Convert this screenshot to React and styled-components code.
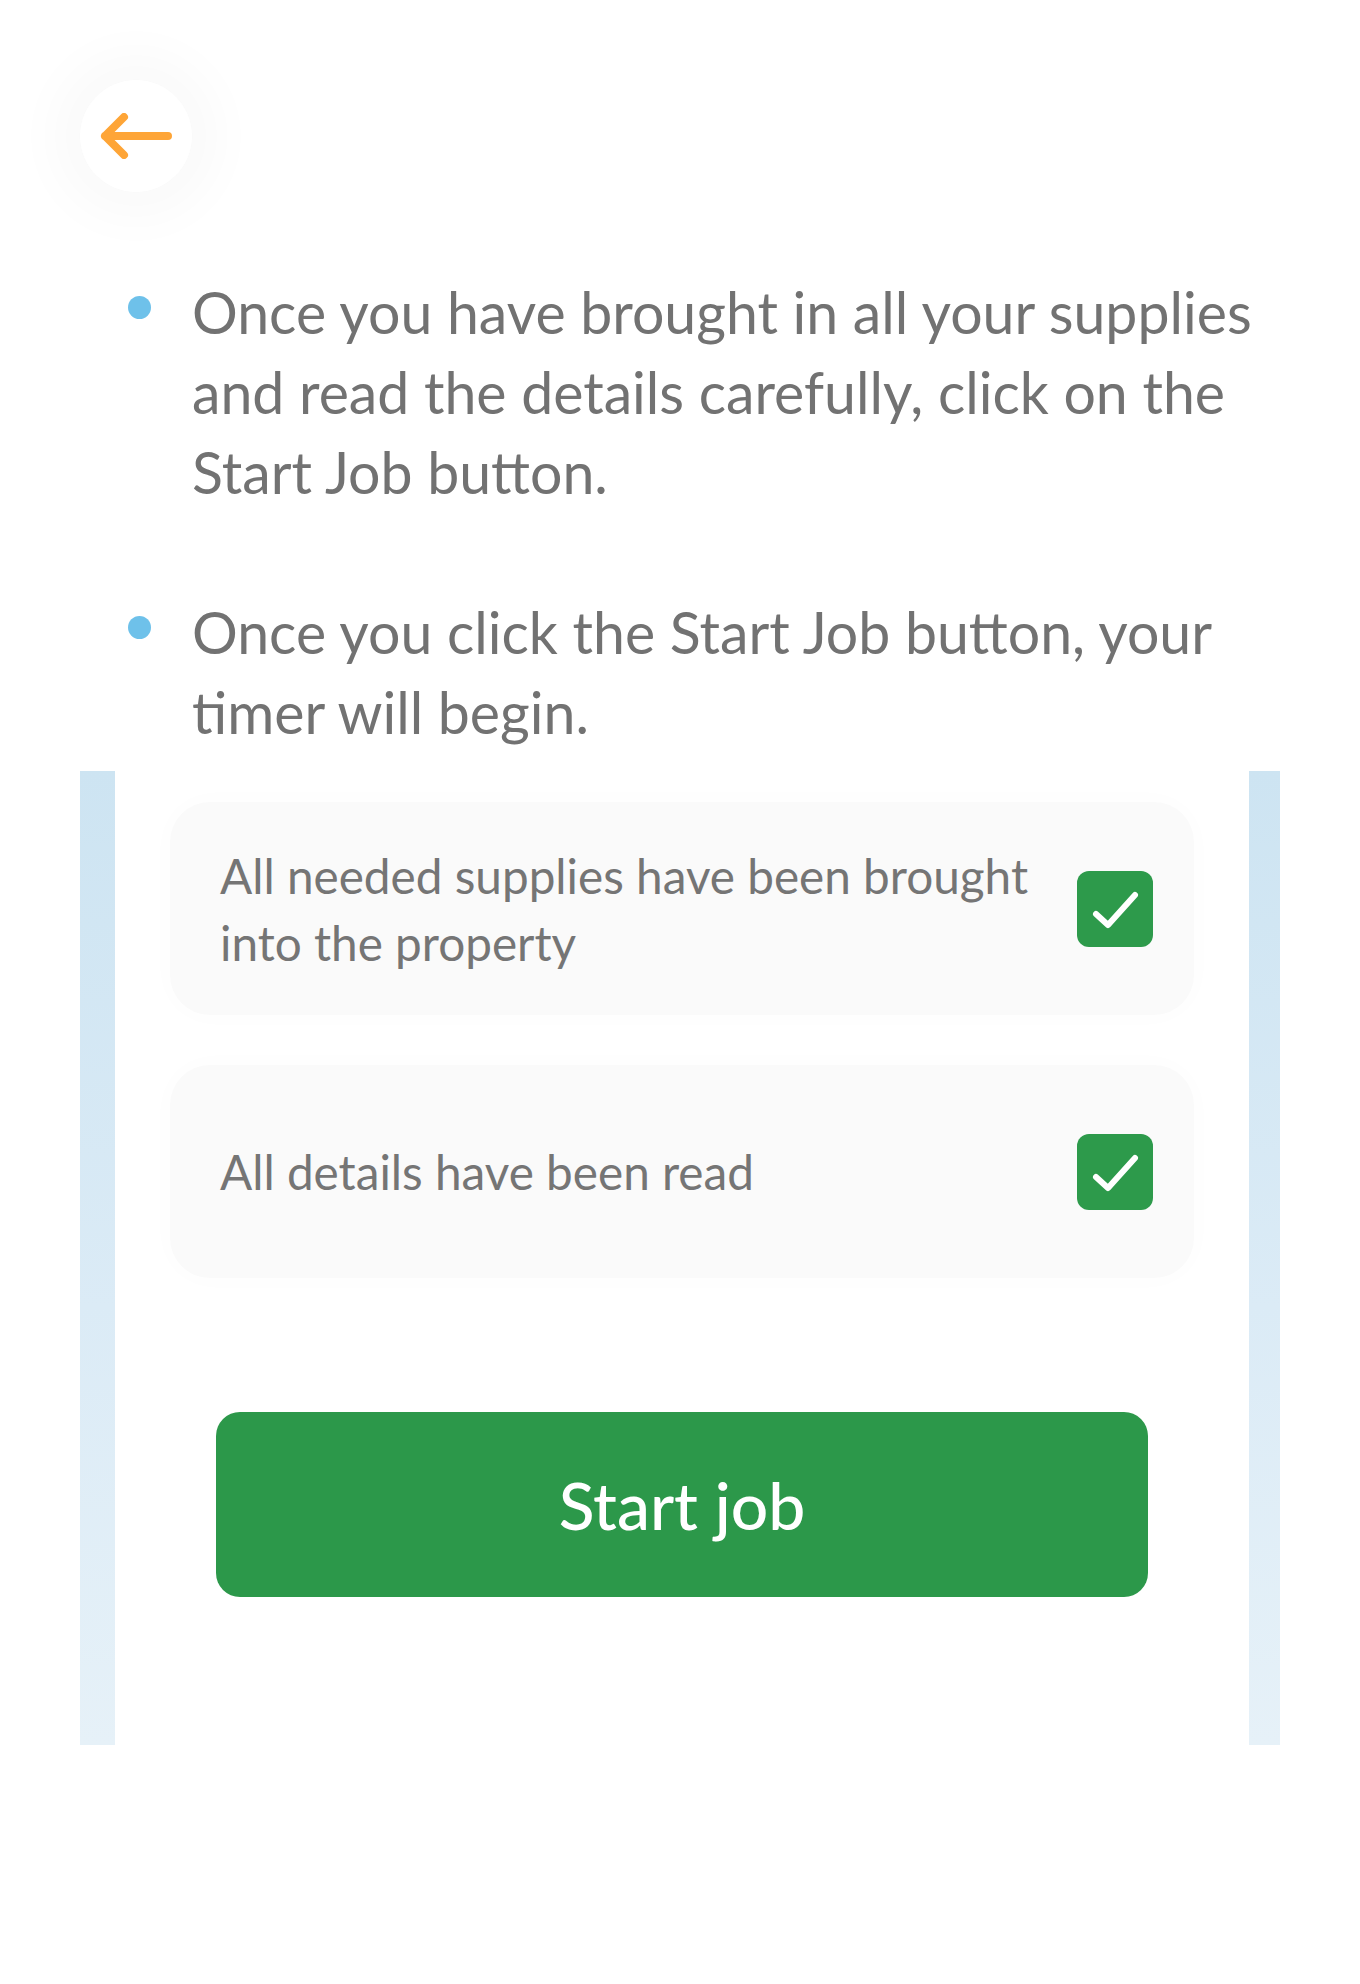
import React from 'react';
import styled, { createGlobalStyle } from 'styled-components';

const GlobalStyle = createGlobalStyle`
  body {
    margin: 0;
    background: #fff;
    font-family: Lato, "Open Sans", sans-serif;
  }
`;

const Page = styled.div`
  width: 1360px;
  min-height: 1984px;
  box-sizing: border-box;
  padding: 80px 80px 0;
  background: #fff;
`;

const BackButton = styled.button`
  width: 112px;
  height: 112px;
  border-radius: 50%;
  border: none;
  background: #fff;
  display: flex;
  align-items: center;
  justify-content: center;
  padding: 0;
  box-shadow: 0 0 50px 28px rgba(0, 0, 0, 0.022);
  cursor: pointer;
`;

const Bullets = styled.ul`
  list-style: none;
  margin: 80px 0 0;
  padding: 0;
`;

const Bullet = styled.li`
  display: flex;
  align-items: flex-start;
  margin-top: ${({ first }) => (first ? '0' : '80px')};
`;

const Dot = styled.span`
  flex: none;
  width: 23px;
  height: 23px;
  border-radius: 50%;
  background: #6ec1ea;
  margin: 24px 41px 0 48px;
`;

const BulletText = styled.p`
  margin: 0;
  font-size: 57.2px;
  line-height: 80px;
  color: #727272;
`;

const Panel = styled.section`
  margin-top: 19px;
  width: 1200px;
  padding: 0 31px 0 35px;
  box-sizing: border-box;
  background: linear-gradient(180deg, #cde4f2 0%, #dbebf6 55%, #e6f1f8 100%);
`;

const PanelBody = styled.div`
  background: #fff;
  padding: 31px 55px 148px 55px;
  display: flex;
  flex-direction: column;
  align-items: center;
`;

const Card = styled.label`
  width: 1024px;
  height: 213px;
  box-sizing: border-box;
  margin-top: ${({ first }) => (first ? '0' : '50px')};
  padding: 0 41px 0 50px;
  border-radius: 40px;
  background: #fafafa;
  box-shadow: 0 0 30px rgba(0, 0, 0, 0.015);
  display: flex;
  align-items: center;
  justify-content: space-between;
  gap: 30px;
`;

const CardText = styled.span`
  font-size: 47.7px;
  line-height: 67px;
  color: #757575;
`;

const Check = styled.span`
  flex: none;
  width: 76px;
  height: 76px;
  border-radius: 12px;
  background: #2d9a4b;
  display: flex;
  align-items: center;
  justify-content: center;
`;

const StartButton = styled.button`
  margin-top: 134px;
  width: 932px;
  height: 185px;
  border: none;
  border-radius: 24px;
  background: #2c984a;
  color: #fff;
  font-family: Lato, "Open Sans", sans-serif;
  font-size: 66px;
  font-weight: 500;
  cursor: pointer;
`;

const ArrowLeft = () => (
  <svg width="72" height="46" viewBox="0 0 72 46" fill="none">
    <path
      d="M68 23H5M24 4 5 23l19 19"
      stroke="#fea537"
      strokeWidth="8"
      strokeLinecap="round"
      strokeLinejoin="round"
    />
  </svg>
);

const CheckMark = () => (
  <svg width="76" height="76" viewBox="0 0 76 76" fill="none">
    <path
      d="M19 43 31 54 58 24"
      stroke="#fff"
      strokeWidth="6"
      strokeLinecap="round"
      strokeLinejoin="round"
    />
  </svg>
);

const items = [
  'All needed supplies have been brought into the property',
  'All details have been read',
];

const App = () => {
  return (
    <>
      <GlobalStyle />
      <Page>
        <BackButton aria-label="Back">
          <ArrowLeft />
        </BackButton>
        <Bullets>
          <Bullet first>
            <Dot />
            <BulletText>
              Once you have brought in all your supplies
              <br />
              and read the details carefully, click on the
              <br />
              Start Job button.
            </BulletText>
          </Bullet>
          <Bullet>
            <Dot />
            <BulletText>
              Once you click the Start Job button, your
              <br />
              timer will begin.
            </BulletText>
          </Bullet>
        </Bullets>
        <Panel>
          <PanelBody>
            {items.map((text, i) => (
              <Card key={i} first={i === 0}>
                <CardText>{text}</CardText>
                <Check>
                  <CheckMark />
                </Check>
              </Card>
            ))}
            <StartButton>Start job</StartButton>
          </PanelBody>
        </Panel>
      </Page>
    </>
  );
};

export default App;
